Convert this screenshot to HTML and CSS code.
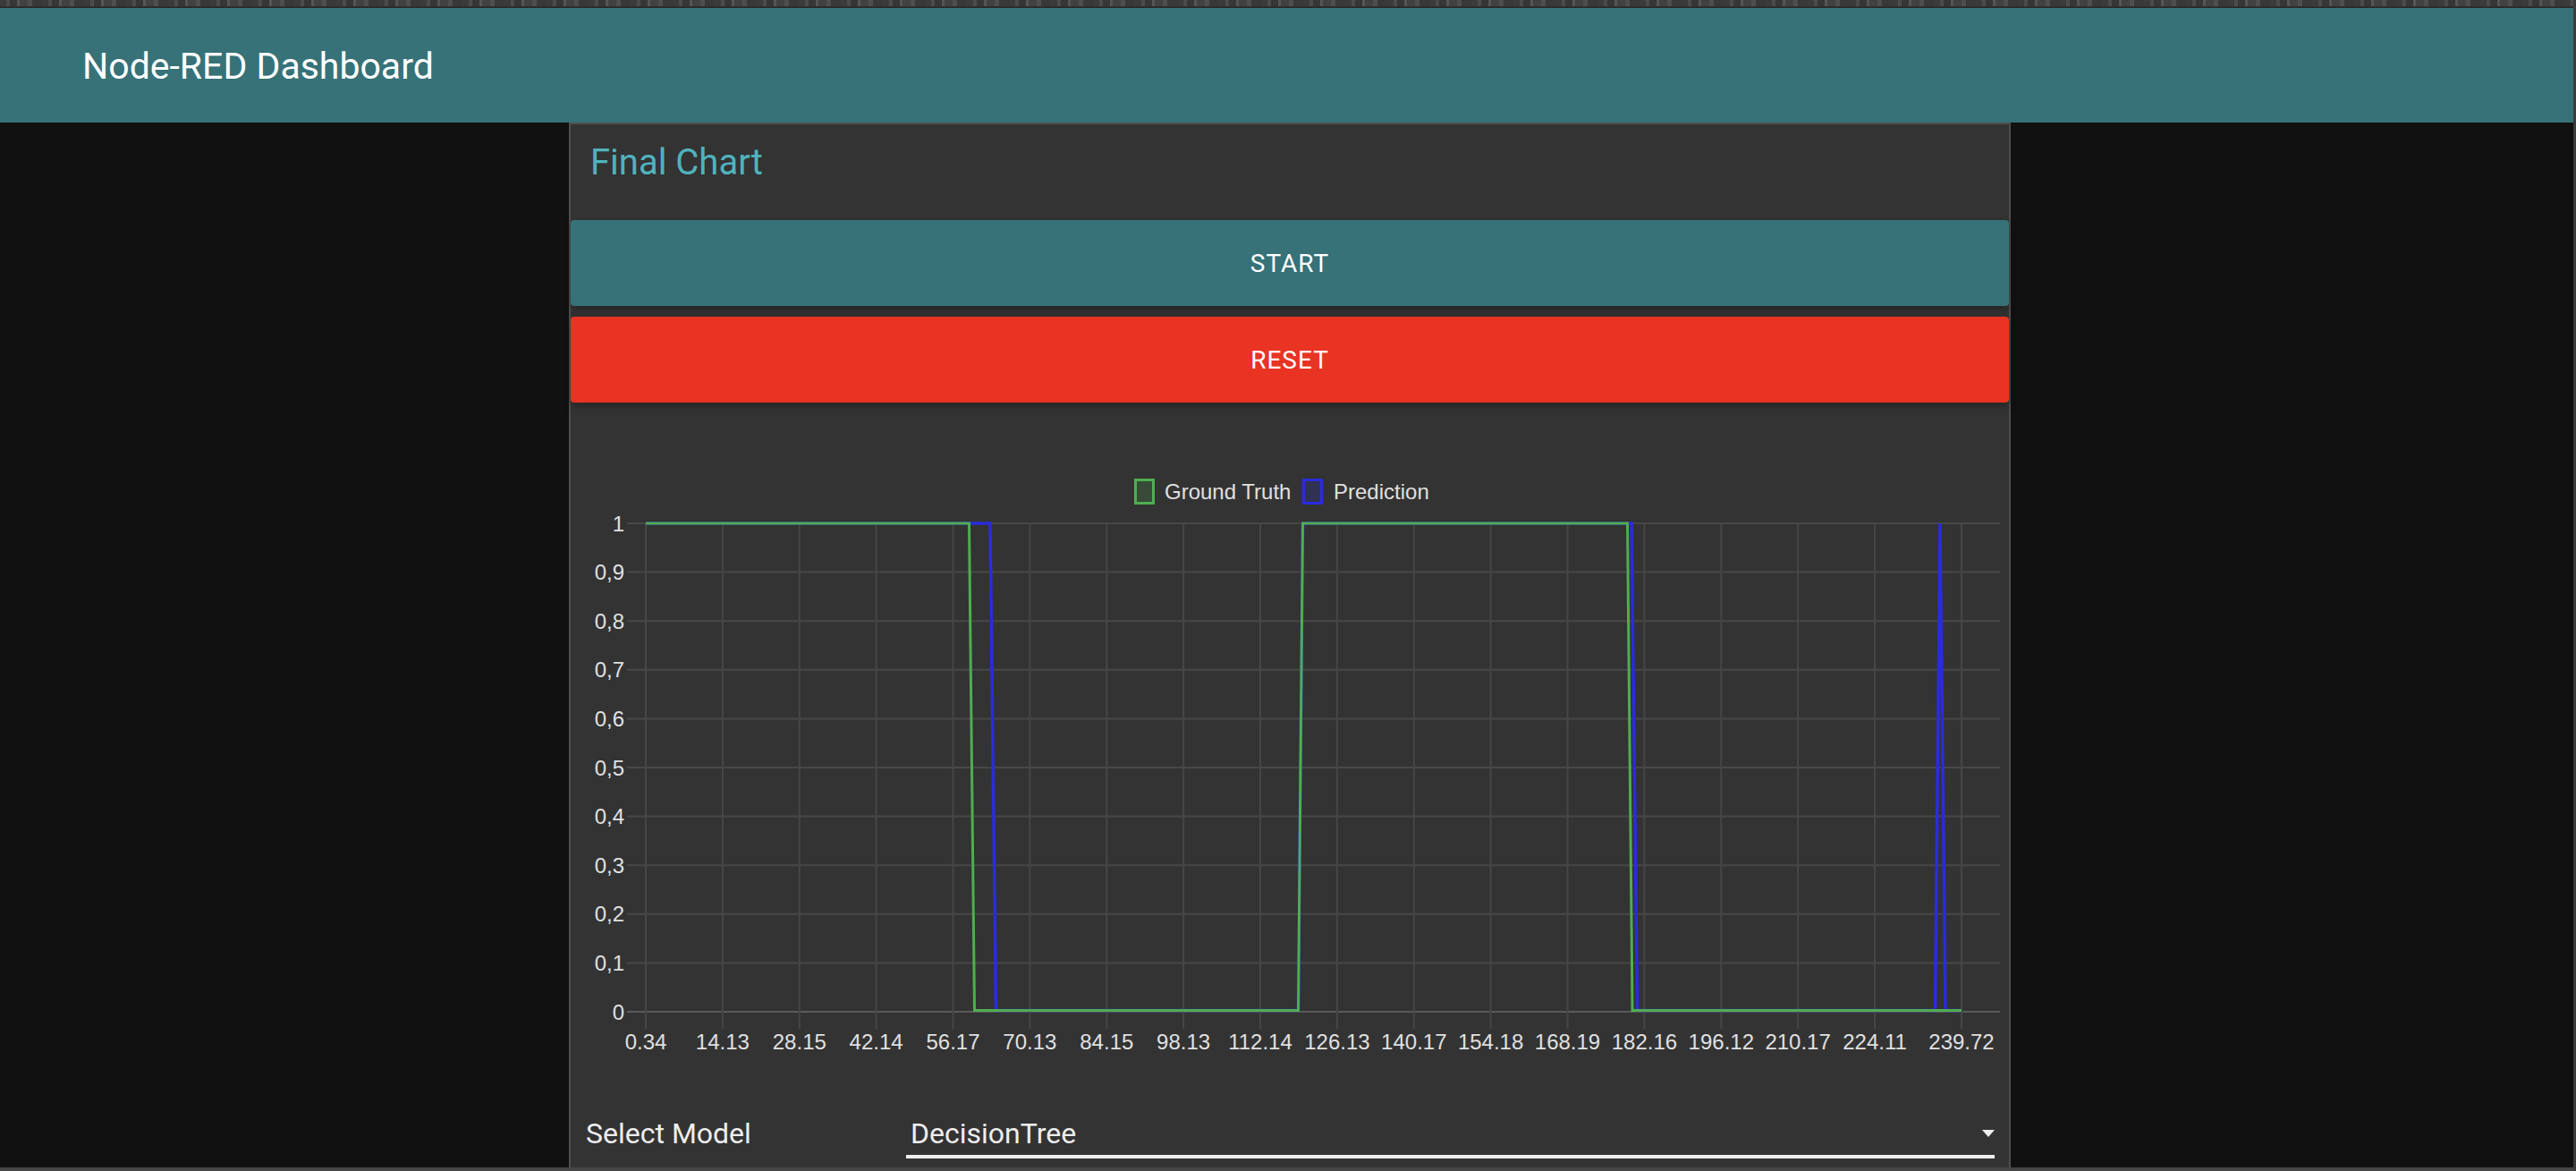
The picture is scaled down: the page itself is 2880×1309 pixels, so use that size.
FILE: index.html
```html
<!DOCTYPE html>
<html lang="en">
<head>
<meta charset="utf-8">
<title>Node-RED Dashboard</title>
<link rel="stylesheet" href="styles.css">
</head>
<body>
<div class="window">
  <div class="topstrip"></div>
  <header class="toolbar"><span class="toolbar-title">Node-RED Dashboard</span></header>
  <main class="content">
    <section class="group">
      <div class="group-title">Final Chart</div>
      <div class="buttons">
        <button class="btn btn-start">START</button>
        <button class="btn btn-reset">RESET</button>
      </div>
      <div class="chart">
        <svg class="chart-svg" width="1608" height="793" viewBox="0 0 1608 793" xmlns="http://www.w3.org/2000/svg">
          <!-- legend -->
          <rect x="631.5" y="86.5" width="20" height="26" fill="rgba(79,174,79,0.2)" stroke="#4fae4f" stroke-width="3"/>
          <text class="lbl" x="664" y="108">Ground Truth</text>
          <rect x="819.5" y="86.5" width="20" height="26" fill="rgba(43,43,222,0.2)" stroke="#2b2bde" stroke-width="3"/>
          <text class="lbl" x="853" y="108">Prediction</text>

          <!-- horizontal grid -->
          <g stroke="#484848" stroke-width="2">
            <line x1="63" y1="135" x2="1598" y2="135"/>
            <line x1="63" y1="189.6" x2="1598" y2="189.6"/>
            <line x1="63" y1="244.2" x2="1598" y2="244.2"/>
            <line x1="63" y1="298.8" x2="1598" y2="298.8"/>
            <line x1="63" y1="353.4" x2="1598" y2="353.4"/>
            <line x1="63" y1="408" x2="1598" y2="408"/>
            <line x1="63" y1="462.6" x2="1598" y2="462.6"/>
            <line x1="63" y1="517.2" x2="1598" y2="517.2"/>
            <line x1="63" y1="571.8" x2="1598" y2="571.8"/>
            <line x1="63" y1="626.4" x2="1598" y2="626.4"/>
          </g>
          <line x1="63" y1="681" x2="1598" y2="681" stroke="#5a5a5a" stroke-width="2"/>

          <!-- vertical grid -->
          <g stroke="#464646" stroke-width="2">
            <line x1="84" y1="135" x2="84" y2="700"/>
            <line x1="169.9" y1="135" x2="169.9" y2="700"/>
            <line x1="255.8" y1="135" x2="255.8" y2="700"/>
            <line x1="341.6" y1="135" x2="341.6" y2="700"/>
            <line x1="427.5" y1="135" x2="427.5" y2="700"/>
            <line x1="513.4" y1="135" x2="513.4" y2="700"/>
            <line x1="599.3" y1="135" x2="599.3" y2="700"/>
            <line x1="685.1" y1="135" x2="685.1" y2="700"/>
            <line x1="771" y1="135" x2="771" y2="700"/>
            <line x1="856.9" y1="135" x2="856.9" y2="700"/>
            <line x1="942.8" y1="135" x2="942.8" y2="700"/>
            <line x1="1028.6" y1="135" x2="1028.6" y2="700"/>
            <line x1="1114.5" y1="135" x2="1114.5" y2="700"/>
            <line x1="1200.4" y1="135" x2="1200.4" y2="700"/>
            <line x1="1286.3" y1="135" x2="1286.3" y2="700"/>
            <line x1="1372.1" y1="135" x2="1372.1" y2="700"/>
            <line x1="1458" y1="135" x2="1458" y2="700"/>
            <line x1="1555" y1="135" x2="1555" y2="700"/>
          </g>

          <!-- y labels -->
          <g class="lbl" text-anchor="end">
            <text x="60" y="143.5">1</text>
            <text x="60" y="198.1">0,9</text>
            <text x="60" y="252.7">0,8</text>
            <text x="60" y="307.3">0,7</text>
            <text x="60" y="361.9">0,6</text>
            <text x="60" y="416.5">0,5</text>
            <text x="60" y="471.1">0,4</text>
            <text x="60" y="525.7">0,3</text>
            <text x="60" y="580.3">0,2</text>
            <text x="60" y="634.9">0,1</text>
            <text x="60" y="689.5">0</text>
          </g>

          <!-- x labels -->
          <g class="lbl" text-anchor="middle">
            <text x="84" y="723">0.34</text>
            <text x="169.9" y="723">14.13</text>
            <text x="255.8" y="723">28.15</text>
            <text x="341.6" y="723">42.14</text>
            <text x="427.5" y="723">56.17</text>
            <text x="513.4" y="723">70.13</text>
            <text x="599.3" y="723">84.15</text>
            <text x="685.1" y="723">98.13</text>
            <text x="771" y="723">112.14</text>
            <text x="856.9" y="723">126.13</text>
            <text x="942.8" y="723">140.17</text>
            <text x="1028.6" y="723">154.18</text>
            <text x="1114.5" y="723">168.19</text>
            <text x="1200.4" y="723">182.16</text>
            <text x="1286.3" y="723">196.12</text>
            <text x="1372.1" y="723">210.17</text>
            <text x="1458" y="723">224.11</text>
            <text x="1555" y="723">239.72</text>
          </g>

          <!-- data -->
          <polyline fill="none" stroke="#2b2bde" stroke-width="3.5"
            points="84,135 469,135 475.5,679.5 813.5,679.5 818.5,135 1186,135 1192.5,679.5 1525.5,679.5 1531,135 1537,679.5 1555,679.5"/>
          <polyline fill="none" stroke="#4fae4f" stroke-width="3"
            points="84,135 445.5,135 451.5,679.5 813.5,679.5 818.5,135 1181.5,135 1187,679.5 1555,679.5"/>
        </svg>
      </div>
      <div class="select-row">
        <div class="select-label">Select Model</div>
        <div class="dropdown">
          <span class="dropdown-value">DecisionTree</span>
          <svg class="dropdown-arrow" width="14" height="8" viewBox="0 0 14 8" xmlns="http://www.w3.org/2000/svg"><polygon points="0,0 14,0 7,8" fill="#eeeeee"/></svg>
        </div>
      </div>
    </section>
  </main>
</div>
</body>
</html>
```
FILE: styles.css
```css
html, body {
  margin: 0;
  padding: 0;
}
body {
  width: 2880px;
  height: 1309px;
  overflow: hidden;
  background: #111111;
  font-family: Roboto, "Noto Sans", sans-serif;
}
.window {
  box-sizing: border-box;
  height: 1309px;
  display: flex;
  flex-direction: column;
  border-right: 3px solid #3c3c3c;
  border-bottom: 4px solid #454545;
}
.topstrip {
  height: 7px;
  border-bottom: 2px solid #2c2c2c;
  background:
    repeating-linear-gradient(90deg,
      #3b3b3b 0 7px, #4b4b4b 7px 11px, #363636 11px 19px,
      #555555 19px 22px, #414141 22px 31px, #4e4e4e 31px 36px,
      #383838 36px 47px);
}
.toolbar {
  height: 128px;
  flex: none;
  box-sizing: border-box;
  background: #367278;
  display: flex;
  align-items: center;
  padding-left: 92px;
  padding-top: 2px;
}
.toolbar-title {
  color: #ffffff;
  font-size: 41px;
  font-weight: 400;
}
.content {
  flex: 1;
  display: flex;
  padding-left: 636px;
  min-height: 0;
}
.group {
  width: 1612px;
  box-sizing: border-box;
  background: #333333;
  border: 2px solid #4e4e4e;
  border-bottom: none;
  display: flex;
  flex-direction: column;
}
.group-title {
  height: 107px;
  box-sizing: border-box;
  padding: 23px 0 0 22px;
  font-size: 40px;
  line-height: 39px;
  color: #50b3be;
}
.buttons {
  display: flex;
  flex-direction: column;
  gap: 12px;
}
.btn {
  display: block;
  width: 100%;
  height: 96px;
  border: none;
  border-radius: 4px;
  margin: 0;
  padding: 0;
  font-family: Roboto, "Noto Sans", sans-serif;
  font-size: 28px;
  font-weight: 400;
  letter-spacing: 1px;
  color: #ffffff;
  box-shadow: 0 4px 8px rgba(0, 0, 0, 0.28);
}
.btn-start {
  background: #367278;
}
.btn-reset {
  background: #e93323;
}
.chart {
  height: 793px;
}
.chart-svg {
  display: block;
}
.lbl {
  font-family: "Liberation Sans", Arial, sans-serif;
  font-size: 24px;
  fill: #e0e0e0;
}
.select-row {
  display: flex;
  padding-left: 17px;
  line-height: 48px;
  font-size: 32px;
  color: #eeeeee;
}
.select-label {
  width: 358px;
}
.dropdown {
  width: 1217px;
  box-sizing: border-box;
  display: flex;
  justify-content: space-between;
  align-items: center;
  padding-left: 5px;
  border-bottom: 4px solid #eeeeee;
}
.dropdown-arrow {
  display: block;
}
```
